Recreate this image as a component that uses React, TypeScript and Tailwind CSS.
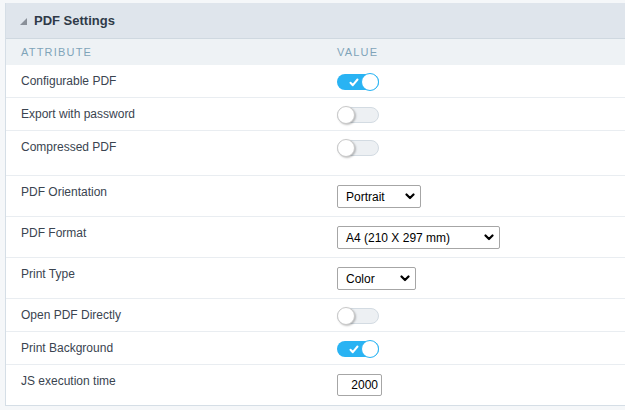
import React from "react";

const font = { fontFamily: '"Liberation Sans", Arial, sans-serif' };

function Toggle({ on }: { on: boolean }) {
  if (on) {
    return (
      <div className="relative h-[16px] w-[42px] rounded-full bg-[#29b3f3]">
        <svg className="absolute left-[12px] top-[4px]" width="10" height="9" viewBox="0 0 10 9">
          <path d="M1.5 4.8 L3.8 7.2 L8.5 1.5" stroke="#fff" strokeWidth="2" fill="none" strokeLinecap="round" strokeLinejoin="round" />
        </svg>
        <div className="absolute right-0 top-[-1px] h-[18px] w-[18px] rounded-full border border-[#29b3f3] bg-white" />
      </div>
    );
  }
  return (
    <div className="relative h-[16px] w-[42px] rounded-full border border-[#d3dbe2] bg-[#edf0f3]">
      <div className="absolute left-[-1px] top-[-2px] h-[18px] w-[18px] rounded-full border border-[#c9c9c9] bg-white shadow-[1px_1px_2px_rgba(0,0,0,0.25)]" />
    </div>
  );
}

function Select({ value, width }: { value: string; width: string }) {
  return (
    <div className={`flex h-[23px] items-center justify-between rounded-[2px] border border-[#a6a6a6] bg-white pl-[8px] pr-[5px] text-[12px] text-black ${width}`}>
      <span>{value}</span>
      <svg width="10" height="7" viewBox="0 0 10 7">
        <path d="M1.5 1.5 L5 5 L8.5 1.5" stroke="#000" strokeWidth="2.2" fill="none" strokeLinecap="round" strokeLinejoin="round" />
      </svg>
    </div>
  );
}

type Row = { label: string; h: string; control: React.ReactNode };

export default function App() {
  const rows: Row[] = [
    { label: "Configurable PDF", h: "h-[33px]", control: <Toggle on /> },
    { label: "Export with password", h: "h-[33px]", control: <Toggle on={false} /> },
    { label: "Compressed PDF", h: "h-[45px]", control: <Toggle on={false} /> },
    { label: "PDF Orientation", h: "h-[41px]", control: <Select value="Portrait" width="w-[84px]" /> },
    { label: "PDF Format", h: "h-[41px]", control: <Select value="A4 (210 X 297 mm)" width="w-[163px]" /> },
    { label: "Print Type", h: "h-[41px]", control: <Select value="Color" width="w-[79px]" /> },
    { label: "Open PDF Directly", h: "h-[33px]", control: <Toggle on={false} /> },
    { label: "Print Background", h: "h-[33px]", control: <Toggle on /> },
    {
      label: "JS execution time",
      h: "h-[40px]",
      control: (
        <div className="flex h-[22px] w-[45px] items-center justify-end rounded-[2px] border border-[#a6a6a6] bg-white pr-[3px] text-[12px] text-black">
          2000
        </div>
      ),
    },
  ];

  return (
    <div className="min-h-[410px] w-[625px] overflow-hidden bg-[#f5f7f9] pl-[5px] pt-[3px]" style={font}>
      <div className="w-[640px] border-b border-l border-[#d5dee6] bg-white">
        <div className="flex h-[36px] items-center border-b border-[#cfd8e0] bg-[#dfe5ec] pl-[13px]">
          <svg width="9" height="9" viewBox="0 0 9 9" className="mr-[6px] mt-[1px]">
            <path d="M8 1 L8 8 L1 8 Z" fill="#8a9099" />
          </svg>
          <span className="text-[13px] font-bold text-[#2f3a48]">PDF Settings</span>
        </div>
        <div className="flex h-[26px] items-center bg-[#eef2f5] text-[11px] tracking-[1.2px] text-[#7fa4b9]">
          <div className="w-[331px] pl-[15px]">ATTRIBUTE</div>
          <div>VALUE</div>
        </div>
        {rows.map((r, i) => (
          <div
            key={r.label}
            className={`flex items-start ${r.h} ${i < rows.length - 1 ? "border-b border-[#e9edf1]" : ""} pt-[9px]`}
          >
            <div className="w-[331px] pl-[15px] text-[12px] leading-[14px] text-[#3a4450]">{r.label}</div>
            <div>{r.control}</div>
          </div>
        ))}
      </div>
    </div>
  );
}
